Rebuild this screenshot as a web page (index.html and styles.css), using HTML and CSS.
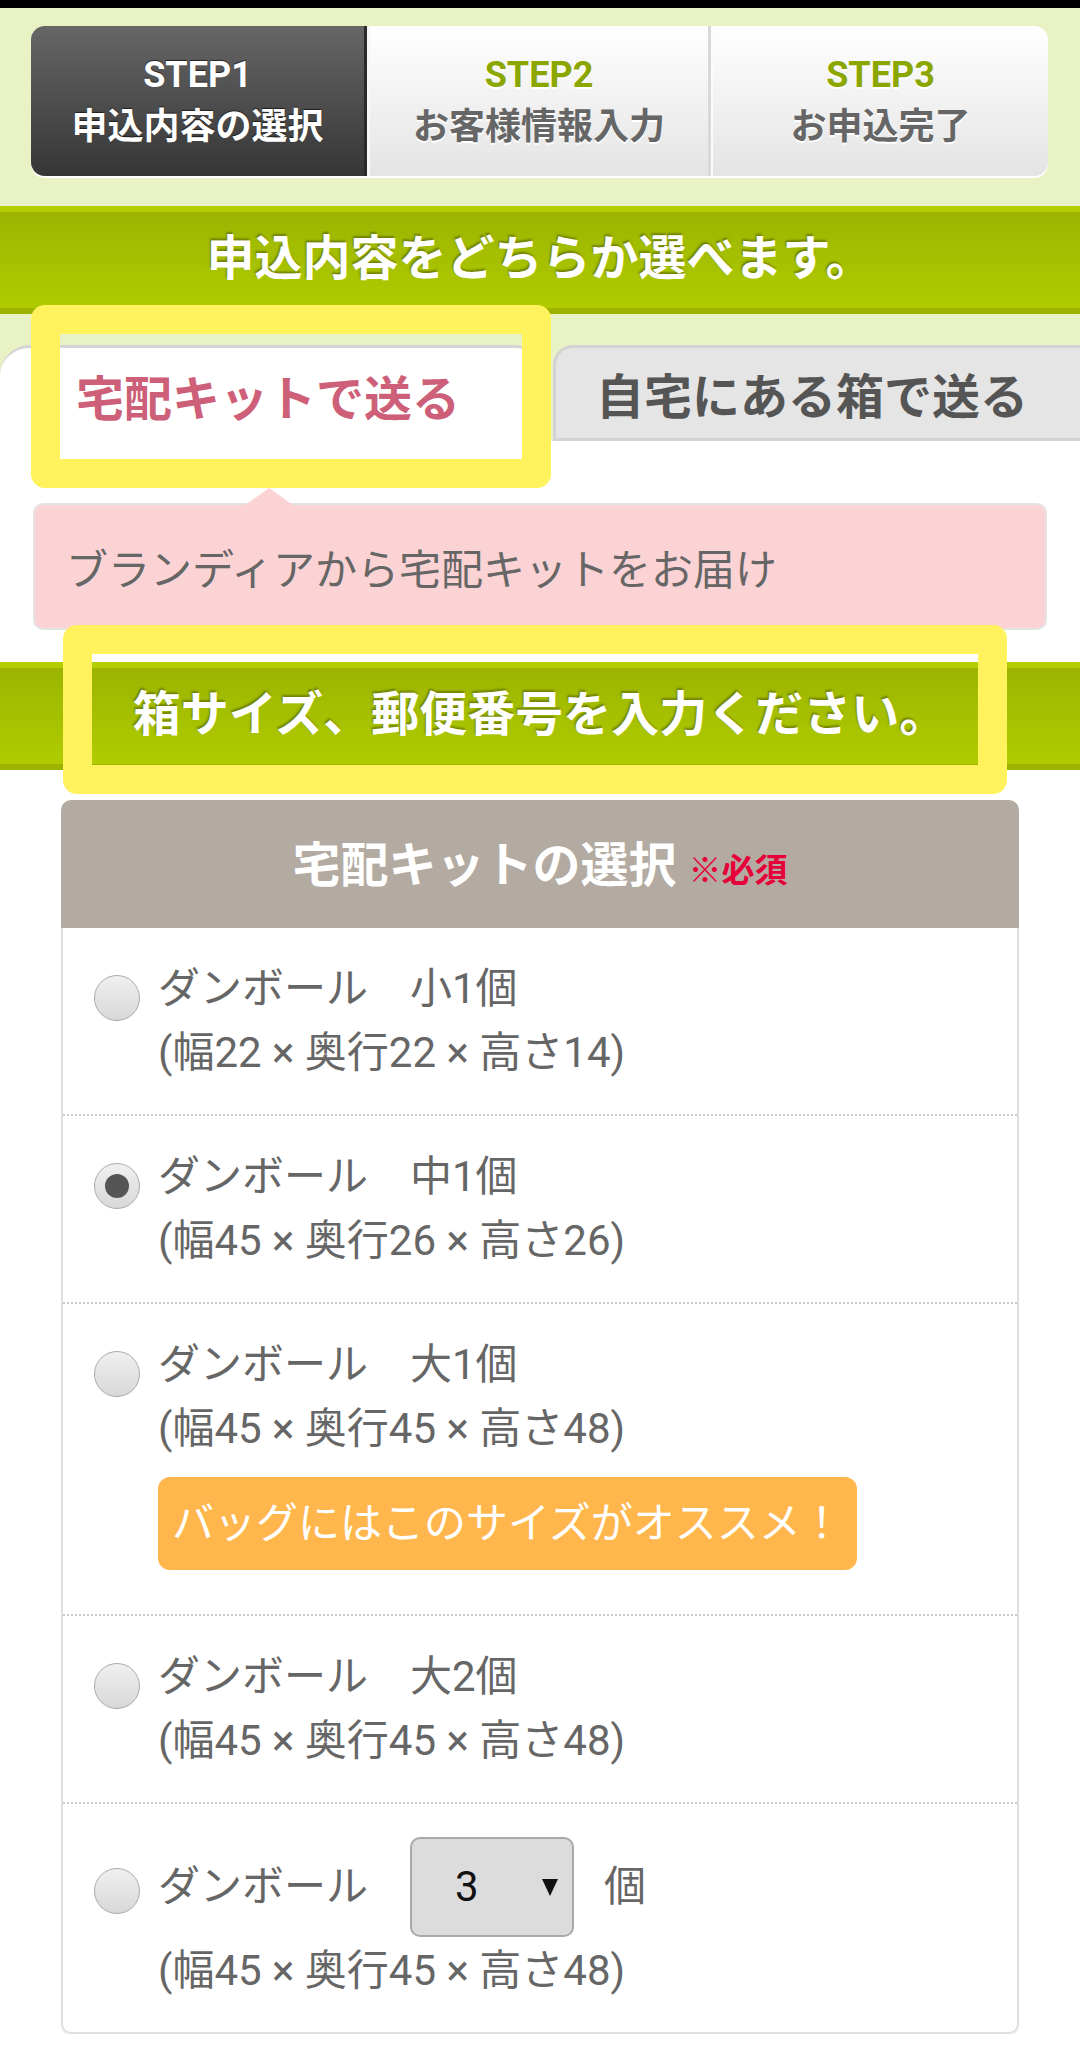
FILE: index.html
```html
<!DOCTYPE html>
<html lang="ja">
<head>
<meta charset="utf-8">
<title>申込内容の選択</title>
<link rel="stylesheet" href="styles.css">
</head>
<body>
<div class="topbar"></div>
<div class="hero">
  <div class="steps">
    <div class="step step-1"><span class="step-num">STEP1</span><span class="step-label">申込内容の選択</span></div>
    <div class="step step-2"><span class="step-num">STEP2</span><span class="step-label">お客様情報入力</span></div>
    <div class="step step-3"><span class="step-num">STEP3</span><span class="step-label">お申込完了</span></div>
  </div>
</div>
<h2 class="band">申込内容をどちらか選べます。</h2>
<div class="tabs">
  <div class="tab tab-active">宅配キットで送る</div>
  <div class="tab tab-inactive">自宅にある箱で送る</div>
</div>
<div class="callout">ブランディアから宅配キットをお届け</div>
<h2 class="band band-2">箱サイズ、郵便番号を入力ください。</h2>
<section class="card">
  <header class="card-head">宅配キットの選択 <span class="req">※必須</span></header>
  <ul class="options">
    <li class="option">
      <span class="radio"></span>
      <div class="opt-text"><div class="line">ダンボール　小1個</div><div class="line">(幅22 × 奥行22 × 高さ14)</div></div>
    </li>
    <li class="option">
      <span class="radio radio-on"></span>
      <div class="opt-text"><div class="line">ダンボール　中1個</div><div class="line">(幅45 × 奥行26 × 高さ26)</div></div>
    </li>
    <li class="option">
      <span class="radio"></span>
      <div class="opt-text"><div class="line">ダンボール　大1個</div><div class="line">(幅45 × 奥行45 × 高さ48)</div><span class="badge">バッグにはこのサイズがオススメ！</span></div>
    </li>
    <li class="option">
      <span class="radio"></span>
      <div class="opt-text"><div class="line">ダンボール　大2個</div><div class="line">(幅45 × 奥行45 × 高さ48)</div></div>
    </li>
    <li class="option option-select">
      <span class="radio radio-low"></span>
      <div class="opt-text"><div class="line line-select">ダンボール<span class="select"><span class="select-val">3</span><span class="select-arrow"></span></span><span class="unit">個</span></div><div class="line">(幅45 × 奥行45 × 高さ48)</div></div>
    </li>
  </ul>
</section>
<div class="hl hl-1"></div>
<div class="hl hl-2"></div>
</body>
</html>
```
FILE: styles.css
```css
* { box-sizing: border-box; }
html, body { margin: 0; padding: 0; }
body {
  background: #fff;
  font-family: Roboto, "Noto Sans CJK JP", sans-serif;
  color: #666;
  width: 1080px;
  position: relative;
  overflow: hidden;
}
.topbar { height: 8px; background: #000; }
.hero { background: #e9f2c5; padding: 18px 32px 30px 31px; }
.steps {
  display: flex;
  height: 150px;
  border-radius: 14px;
  overflow: hidden;
  box-shadow: 0 2px 0 #fff;
}
.step {
  display: flex;
  flex-direction: column;
  align-items: center;
  justify-content: center;
  font-weight: bold;
  line-height: 52px;
}
.step-num { font-size: 36px; }
.step-label { font-size: 36px; }
.step-1 {
  flex: 0 0 336px;
  background: linear-gradient(#666, #363636);
  border-right: 3px solid #2a2a2a;
  color: #fff;
  text-shadow: 0 -1px 1px rgba(0,0,0,.6);
}
.step-2, .step-3 {
  background: linear-gradient(#fff, #e4e4e4);
  color: #666;
  text-shadow: 0 2px 0 #fff;
}
.step-2 { flex: 0 0 344px; border-left: 3px solid #f6f6f6; border-right: 3px solid #d9d9d9; }
.step-3 { flex: 1; border-left: 2px solid #fbfbfb; }
.step-2 .step-num, .step-3 .step-num { color: #8ca600; }
.band {
  margin: 0;
  height: 108px;
  border-top: 6px solid #b3cd00;
  border-bottom: 6px solid #9cb400;
  background: linear-gradient(#9bb400, #b0cc00);
  color: #fff;
  font-size: 48px;
  font-weight: bold;
  line-height: 94px;
  text-align: center;
  text-shadow: -1px -2px 2px rgba(80,90,0,.6);
}
.band-2 { margin-top: 32px; }
.tabs {
  display: flex;
  align-items: flex-start;
  gap: 23px;
  height: 127px;
  padding-top: 31px;
  background: #e9f2c5;
  overflow: hidden;
}
.tab {
  height: 96px;
  display: flex;
  align-items: center;
  font-size: 48px;
  font-weight: bold;
}
.tab-active {
  flex: 0 0 530px;
  background: #fff;
  border-top: 3px solid #d4d4d4;
  border-radius: 30px 14px 0 0;
  color: #cd5f78;
  padding-left: 76px;
}
.tab-inactive {
  flex: 1;
  margin-right: -30px;
  background: #e5e5e5;
  border: 3px solid #d3d3d3;
  border-radius: 20px 20px 0 0;
  color: #555;
  padding-left: 40px;
}
.callout {
  position: relative;
  margin: 62px 33px 0;
  height: 127px;
  background: #fcd3d4;
  border: 2px solid #e3e3e3;
  border-radius: 10px;
  display: flex;
  align-items: center;
  padding-left: 31px;
  font-size: 42px;
  color: #666;
}
.callout::before {
  content: "";
  position: absolute;
  left: 210px;
  top: -17px;
  border-left: 24px solid transparent;
  border-right: 24px solid transparent;
  border-bottom: 17px solid #fcd3d4;
}
.card { margin: 30px 61px 0; }
.card-head {
  height: 128px;
  line-height: 132px;
  background: #b3aaa1;
  border-radius: 10px 10px 0 0;
  color: #fff;
  font-size: 48px;
  font-weight: bold;
  text-align: center;
}
.req { color: #e6003a; font-size: 33px; }
.options {
  list-style: none;
  margin: 0;
  padding: 0;
  border: 2px solid #e0e0e0;
  border-top: none;
  border-radius: 0 0 10px 10px;
  box-shadow: 0 2px 2px rgba(0,0,0,.06);
}
.option {
  display: flex;
  align-items: flex-start;
  padding: 29px 0 29px 31px;
  border-bottom: 2px dotted #c9c9c9;
}
.option:last-child { border-bottom: none; }
.option-select { padding-top: 31px; }
.radio {
  flex: none;
  width: 46px;
  height: 46px;
  margin: 18px 18px 0 0;
  border-radius: 50%;
  border: 1.5px solid #aaa;
  background: linear-gradient(#f0f0f0, #d8d8d8);
  display: flex;
  align-items: center;
  justify-content: center;
}
.radio-on::after {
  content: "";
  width: 24px;
  height: 24px;
  border-radius: 50%;
  background: #555;
}
.radio-low { margin-top: 33px; }
.opt-text { font-size: 42px; color: #666; }
.line { line-height: 64px; white-space: nowrap; }
.line-select { display: flex; align-items: center; height: 104px; }
.select {
  display: flex;
  align-items: center;
  justify-content: space-between;
  width: 164px;
  height: 100px;
  margin-left: 42px;
  padding: 0 14px 0 43px;
  background: #dcdcdc;
  border: 2px solid #a9a9a9;
  border-radius: 10px;
  color: #111;
}
.select-arrow {
  width: 0;
  height: 0;
  border-left: 8px solid transparent;
  border-right: 8px solid transparent;
  border-top: 17px solid #111;
}
.unit { margin-left: 30px; }
.badge {
  display: inline-block;
  margin: 16px 0 15px;
  height: 93px;
  line-height: 93px;
  padding: 0 14px;
  background: #ffb74d;
  border-radius: 12px;
  color: #fff;
  font-size: 42px;
}
.hl {
  position: absolute;
  border: 29px solid #fff25c;
  border-radius: 14px;
}
.hl-1 { left: 31px; top: 305px; width: 520px; height: 183px; }
.hl-2 { left: 63px; top: 625px; width: 944px; height: 169px; }
```
